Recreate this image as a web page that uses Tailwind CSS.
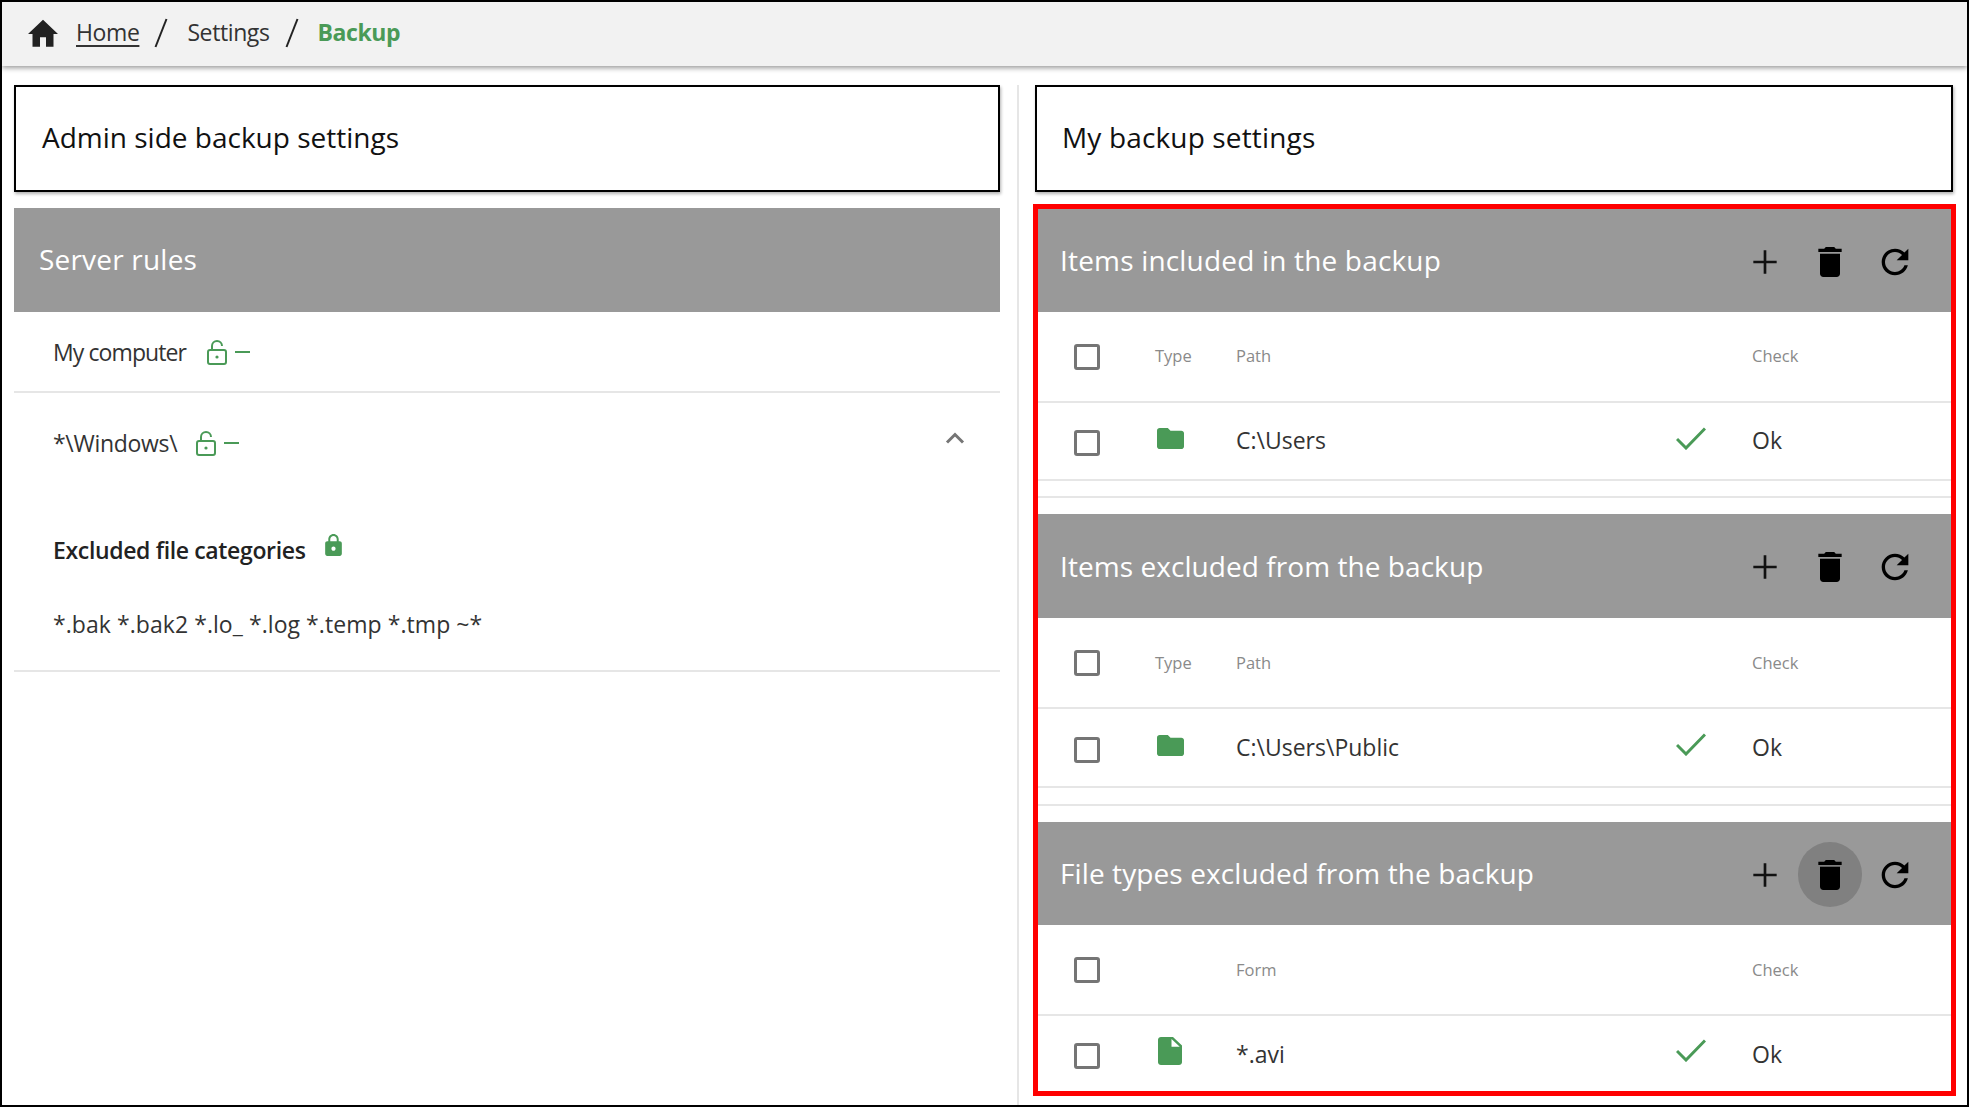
<!DOCTYPE html>
<html lang="en">
   <head>
      <meta charset="UTF-8" />
      <meta name="viewport" content="width=device-width, initial-scale=1.0" />
      <script src="https://cdn.jsdelivr.net/npm/@tailwindcss/browser@4"></script>
      <title>Backup</title>
   </head>

   <body class="bg-white text-[#333] font-['Open_Sans',sans-serif]">
      <div class="h-[1107px] w-[1969px] overflow-hidden border-2 border-black flex flex-col">
         <!-- Breadcrumb -->
         <header class="relative z-10 h-[64px] shrink-0 bg-[#f2f2f2] shadow-[0_2px_5px_rgba(0,0,0,0.4)] flex items-center pl-[23px] text-[23px] tracking-[-0.4px]">
            <svg class="w-[36px] h-[38px]" viewBox="0 0 24 24" preserveAspectRatio="none" fill="#222"><path d="M10 20v-6h4v6h5v-8h3L12 3 2 12h3v8z" /></svg>
            <a class="ml-[15px] mb-[3px] underline underline-offset-4 text-[#333]">Home</a>
            <span class="ml-[15px] mb-[2px] w-[14px] text-[#222]"><svg class="w-[14px] h-[30px]" viewBox="0 0 14 30" fill="none" stroke="#222" stroke-width="2"><path d="M12.5 1 1.5 29" /></svg></span>
            <span class="ml-[19px] mb-[4px]">Settings</span>
            <span class="ml-[15px] mb-[2px] w-[14px]"><svg class="w-[14px] h-[30px]" viewBox="0 0 14 30" fill="none" stroke="#222" stroke-width="2"><path d="M12.5 1 1.5 29" /></svg></span>
            <span class="ml-[19px] mb-[4px] font-bold text-[#4a9a57]">Backup</span>
         </header>

         <main class="flex flex-1 min-h-0">
            <!-- Admin side -->
            <section class="w-[986px] ml-[12px] shrink-0 pt-[19px]">
               <div class="h-[107px] pb-[3px] border-[2.5px] border-black shadow-[1px_2px_3px_rgba(0,0,0,0.3)] flex items-center pl-[26px] text-[28px] text-[#111]">Admin side backup settings</div>
               <div class="mt-[16px] h-[104px] pb-[2px] bg-[#999] text-white flex items-center pl-[25px] text-[28px] tracking-[0.2px]">Server rules</div>

               <div class="h-[81px] pt-[1px] border-b-2 border-[#e6e6e6] flex items-center pl-[39px] text-[23px]">
                  <span class="tracking-[-0.9px]">My computer</span>
                  <svg class="ml-[20px] w-[22px] h-[25px]" viewBox="0 0 22 25" fill="none" stroke="#4a9a57" stroke-width="2"><rect x="2" y="10" width="18" height="14" rx="2" /><path d="M6 10V6a5 5 0 0 1 10 0" /><circle cx="11" cy="17" r="1.6" fill="#4a9a57" stroke="none" /></svg>
                  <div class="ml-[7px] w-[15px] h-[2px] bg-[#4a9a57]"></div>
               </div>

               <div class="h-[279px] pt-[37px] border-b-2 border-[#e6e6e6] pl-[39px] relative text-[23px]">
                  <div class="flex items-center h-[26px]">
                     <span class="tracking-[-0.3px]">*\Windows\</span>
                     <svg class="ml-[18px] w-[22px] h-[25px]" viewBox="0 0 22 25" fill="none" stroke="#4a9a57" stroke-width="2"><rect x="2" y="10" width="18" height="14" rx="2" /><path d="M6 10V6a5 5 0 0 1 10 0" /><circle cx="11" cy="17" r="1.6" fill="#4a9a57" stroke="none" /></svg>
                     <div class="ml-[7px] w-[15px] h-[2px] bg-[#4a9a57]"></div>
                  </div>
                  <svg class="absolute left-[931px] top-[38px] w-[20px] h-[13px]" viewBox="0 0 20 13" fill="none" stroke="#757575" stroke-width="3"><path d="M2 11.5 10 3.5l8 8" /></svg>
                  <div class="flex items-center mt-[77px]">
                     <span class="font-semibold text-[#222] tracking-[-0.35px]">Excluded file categories</span>
                     <svg class="ml-[16px] -mt-[10px] w-[25px] h-[25px]" viewBox="0 0 24 24" fill="#4a9a57"><path d="M18 8h-1V6c0-2.76-2.24-5-5-5S7 3.24 7 6v2H6c-1.1 0-2 .9-2 2v10c0 1.1.9 2 2 2h12c1.1 0 2-.9 2-2V10c0-1.1-.9-2-2-2zm-6 9c-1.1 0-2-.9-2-2s.9-2 2-2 2 .9 2 2-.9 2-2 2zm3.1-9H8.9V6c0-1.71 1.39-3.1 3.1-3.1 1.71 0 3.1 1.39 3.1 3.1v2z" /></svg>
                  </div>
                  <div class="mt-[39px] tracking-[0.06px]">*.bak *.bak2 *.lo_ *.log *.temp *.tmp ~*</div>
               </div>
            </section>

            <!-- Divider -->
            <div class="ml-[17px] w-[2px] shrink-0 mt-[19px] bg-[#e6e6e6]"></div>

            <!-- My backup -->
            <section class="ml-[14px] w-[923px] shrink-0 pt-[19px]">
               <div class="ml-[2px] w-[918px] h-[107px] pb-[3px] border-[2.5px] border-black shadow-[1px_2px_3px_rgba(0,0,0,0.3)] flex items-center pl-[25px] text-[28px] text-[#111] tracking-[0.15px]">My backup settings</div>

               <div class="mt-[12px] h-[892px] border-[5px] border-[#f00] overflow-hidden">
                  <!-- Included -->
                  <div class="h-[103px] bg-[#999] flex items-center pl-[22px] text-white text-[28px] tracking-[0.18px]">
                     <span class="flex-1 mb-[2px]">Items included in the backup</span>
                     <div class="flex items-center pr-[36px] gap-[25px] mt-[2px]">
                        <svg class="w-[40px] h-[40px]" viewBox="0 0 24 24" fill="none" stroke="#111" stroke-width="1.6"><path d="M12 5v14M5 12h14" /></svg>
                        <svg class="w-[40px] h-[40px]" viewBox="0 0 24 24" fill="#000"><path d="M6 19c0 1.1.9 2 2 2h8c1.1 0 2-.9 2-2V7H6v12zM19 4h-3.5l-1-1h-5l-1 1H5v2h14V4z" /></svg>
                        <svg class="w-[40px] h-[40px]" viewBox="0 0 24 24" fill="#000"><path d="M17.65 6.35C16.2 4.9 14.21 4 12 4c-4.42 0-7.99 3.58-7.99 8s3.57 8 7.99 8c3.73 0 6.84-2.55 7.73-6h-2.08c-.82 2.33-3.04 4-5.65 4-3.31 0-6-2.69-6-6s2.69-6 6-6c1.66 0 3.14.69 4.22 1.78L13 11h7V4l-2.35 2.35z" /></svg>
                     </div>
                  </div>
                  <div class="h-[91px] border-b-2 border-[#e6e6e6] pl-[36px] grid grid-cols-[81px_81px_440px_76px_1fr] items-center text-[16.5px] text-[#8a8a8a]">
                     <div class="w-[26px] h-[26px] border-[3px] border-[#757575] rounded-[3px]"></div>
                     <span>Type</span>
                     <span class="col-span-2">Path</span>
                     <span>Check</span>
                  </div>
                  <div class="h-[78px] border-b-2 border-[#e6e6e6] pl-[36px] grid grid-cols-[81px_81px_440px_76px_1fr] items-center text-[23px]">
                     <div class="w-[26px] h-[26px] border-[3px] border-[#757575] rounded-[3px] mt-[4px]"></div>
                     <svg class="ml-[2px] mb-[5px] w-[27px] h-[21px]" viewBox="2 4 20 16" preserveAspectRatio="none" fill="#4a9a57"><path d="M10 4H4c-1.1 0-2 .9-2 2v12c0 1.1.9 2 2 2h16c1.1 0 2-.9 2-2V8c0-1.1-.9-2-2-2h-8l-2-2z" /></svg>
                     <span class="mb-[2px]">C:\Users</span>
                     <svg class="mb-[6px] w-[30px] h-[23px]" viewBox="0 0 30 23" fill="none" stroke="#4a9a57" stroke-width="3"><path d="M1 12l9 9L29 1.5" /></svg>
                     <span class="mb-[2px]">Ok</span>
                  </div>
                  <div class="h-[17px] border-b-2 border-[#e6e6e6]"></div>

                  <!-- Excluded -->
                  <div class="mt-[16px] h-[104px] bg-[#999] flex items-center pl-[22px] text-white text-[28px] tracking-[0.06px]">
                     <span class="flex-1">Items excluded from the backup</span>
                     <div class="flex items-center pr-[36px] gap-[25px] mt-[2px]">
                        <svg class="w-[40px] h-[40px]" viewBox="0 0 24 24" fill="none" stroke="#111" stroke-width="1.6"><path d="M12 5v14M5 12h14" /></svg>
                        <svg class="w-[40px] h-[40px]" viewBox="0 0 24 24" fill="#000"><path d="M6 19c0 1.1.9 2 2 2h8c1.1 0 2-.9 2-2V7H6v12zM19 4h-3.5l-1-1h-5l-1 1H5v2h14V4z" /></svg>
                        <svg class="w-[40px] h-[40px]" viewBox="0 0 24 24" fill="#000"><path d="M17.65 6.35C16.2 4.9 14.21 4 12 4c-4.42 0-7.99 3.58-7.99 8s3.57 8 7.99 8c3.73 0 6.84-2.55 7.73-6h-2.08c-.82 2.33-3.04 4-5.65 4-3.31 0-6-2.69-6-6s2.69-6 6-6c1.66 0 3.14.69 4.22 1.78L13 11h7V4l-2.35 2.35z" /></svg>
                     </div>
                  </div>
                  <div class="h-[91px] border-b-2 border-[#e6e6e6] pl-[36px] grid grid-cols-[81px_81px_440px_76px_1fr] items-center text-[16.5px] text-[#8a8a8a]">
                     <div class="w-[26px] h-[26px] border-[3px] border-[#757575] rounded-[3px]"></div>
                     <span class="mt-[2px]">Type</span>
                     <span class="col-span-2 mt-[2px]">Path</span>
                     <span class="mt-[2px]">Check</span>
                  </div>
                  <div class="h-[79px] border-b-2 border-[#e6e6e6] pl-[36px] grid grid-cols-[81px_81px_440px_76px_1fr] items-center text-[23px]">
                     <div class="w-[26px] h-[26px] border-[3px] border-[#757575] rounded-[3px] mt-[4px]"></div>
                     <svg class="ml-[2px] mb-[5px] w-[27px] h-[21px]" viewBox="2 4 20 16" preserveAspectRatio="none" fill="#4a9a57"><path d="M10 4H4c-1.1 0-2 .9-2 2v12c0 1.1.9 2 2 2h16c1.1 0 2-.9 2-2V8c0-1.1-.9-2-2-2h-8l-2-2z" /></svg>
                     <span>C:\Users\Public</span>
                     <svg class="mb-[6px] w-[30px] h-[23px]" viewBox="0 0 30 23" fill="none" stroke="#4a9a57" stroke-width="3"><path d="M1 12l9 9L29 1.5" /></svg>
                     <span>Ok</span>
                  </div>
                  <div class="h-[18px] border-b-2 border-[#e6e6e6]"></div>

                  <!-- File types -->
                  <div class="mt-[16px] h-[103px] bg-[#999] flex items-center pl-[22px] text-white text-[28px] tracking-[0.1px]">
                     <span class="flex-1 mb-[2px]">File types excluded from the backup</span>
                     <div class="flex items-center pr-[36px] gap-[25px] mt-[2px]">
                        <svg class="w-[40px] h-[40px]" viewBox="0 0 24 24" fill="none" stroke="#111" stroke-width="1.6"><path d="M12 5v14M5 12h14" /></svg>
                        <div class="relative w-[40px] h-[40px]">
                           <div class="absolute -inset-[12px] -top-[13px] rounded-full bg-[#808080]"></div>
                           <svg class="relative w-[40px] h-[40px]" viewBox="0 0 24 24" fill="#000"><path d="M6 19c0 1.1.9 2 2 2h8c1.1 0 2-.9 2-2V7H6v12zM19 4h-3.5l-1-1h-5l-1 1H5v2h14V4z" /></svg>
                        </div>
                        <svg class="w-[40px] h-[40px]" viewBox="0 0 24 24" fill="#000"><path d="M17.65 6.35C16.2 4.9 14.21 4 12 4c-4.42 0-7.99 3.58-7.99 8s3.57 8 7.99 8c3.73 0 6.84-2.55 7.73-6h-2.08c-.82 2.33-3.04 4-5.65 4-3.31 0-6-2.69-6-6s2.69-6 6-6c1.66 0 3.14.69 4.22 1.78L13 11h7V4l-2.35 2.35z" /></svg>
                     </div>
                  </div>
                  <div class="h-[91px] border-b-2 border-[#e6e6e6] pl-[36px] grid grid-cols-[81px_81px_440px_76px_1fr] items-center text-[16.5px] text-[#8a8a8a]">
                     <div class="w-[26px] h-[26px] border-[3px] border-[#757575] rounded-[3px]"></div>
                     <span></span>
                     <span class="col-span-2 mt-[2px]">Form</span>
                     <span class="mt-[2px]">Check</span>
                  </div>
                  <div class="h-[74px] pl-[36px] grid grid-cols-[81px_81px_440px_76px_1fr] items-center text-[23px]">
                     <div class="w-[26px] h-[26px] border-[3px] border-[#757575] rounded-[3px] mt-[6px]"></div>
                     <svg class="ml-[3px] mb-[4px] w-[24px] h-[28px]" viewBox="4 2 16 20" preserveAspectRatio="none" fill="#4a9a57"><path d="M6 2c-1.1 0-2 .9-2 2v16c0 1.1.9 2 2 2h12c1.1 0 2-.9 2-2V8l-6-6H6zm7 7V3.5L18.5 9H13z" /></svg>
                     <span class="mt-[2px]">*.avi</span>
                     <svg class="mb-[6px] w-[30px] h-[23px]" viewBox="0 0 30 23" fill="none" stroke="#4a9a57" stroke-width="3"><path d="M1 12l9 9L29 1.5" /></svg>
                     <span class="mt-[2px]">Ok</span>
                  </div>
               </div>
            </section>
         </main>
      </div>
   </body>
</html>
